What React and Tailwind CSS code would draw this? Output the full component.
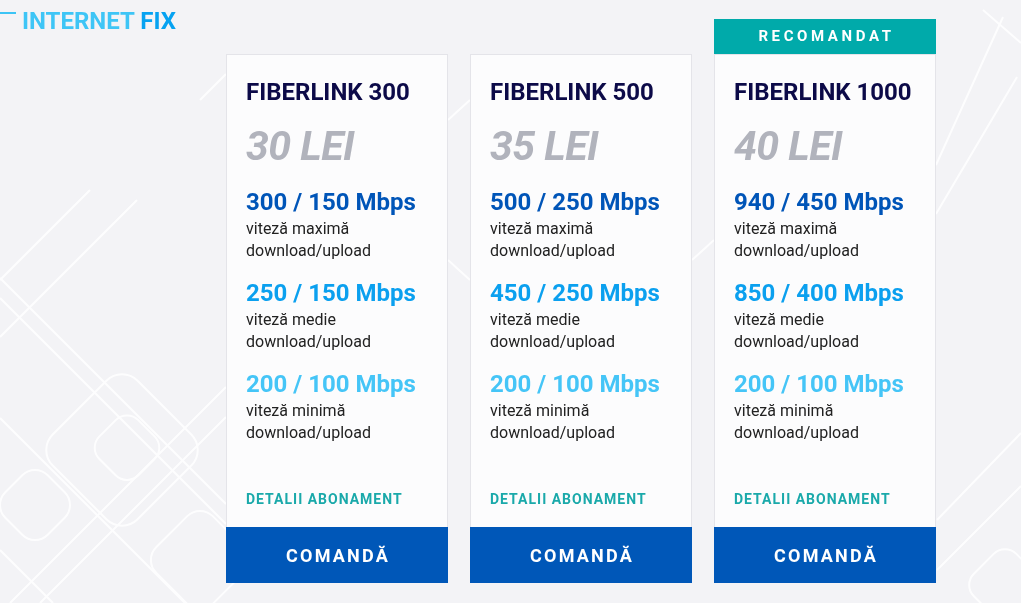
import React from "react";

const plans = [
  { name: "FIBERLINK 300", price: "30 LEI", speeds: ["300 / 150 Mbps", "250 / 150 Mbps", "200 / 100 Mbps"] },
  { name: "FIBERLINK 500", price: "35 LEI", speeds: ["500 / 250 Mbps", "450 / 250 Mbps", "200 / 100 Mbps"] },
  { name: "FIBERLINK 1000", price: "40 LEI", speeds: ["940 / 450 Mbps", "850 / 400 Mbps", "200 / 100 Mbps"], rec: true },
];

const labels = ["viteză maximă", "viteză medie", "viteză minimă"];
const colors = ["text-[#0055b8]", "text-[#0ba0ef]", "text-[#45c5f7]"];

function Pattern() {
  return (
    <svg className="absolute inset-0 w-full h-full pointer-events-none" viewBox="0 0 1021 603" preserveAspectRatio="none">
      <g stroke="#ffffff" strokeWidth="2" fill="none" opacity="0.85">
        <line x1="0" y1="280" x2="90" y2="190" />
        <line x1="0" y1="337" x2="137" y2="200" />
        <line x1="0" y1="278" x2="226" y2="504" />
        <line x1="0" y1="298" x2="226" y2="524" />
        <line x1="0" y1="418" x2="185" y2="603" />
        <line x1="0" y1="550" x2="53" y2="603" />
        <line x1="40" y1="603" x2="226" y2="417" />
        <line x1="10" y1="603" x2="226" y2="387" />
        <rect x="62" y="390" width="120" height="120" rx="22" transform="rotate(45 122 450)" />
        <rect x="100" y="420" width="55" height="55" rx="16" transform="rotate(45 127 447)" />
        <rect x="5" y="475" width="60" height="60" rx="18" transform="rotate(45 35 505)" />
        <rect x="160" y="520" width="80" height="80" rx="18" transform="rotate(45 200 560)" />
        <line x1="937" y1="520" x2="1021" y2="433" />
        <line x1="937" y1="570" x2="1021" y2="486" />
        <rect x="975" y="555" width="60" height="60" rx="16" transform="rotate(45 1005 585)" />
        <line x1="983" y1="10" x2="1021" y2="43" />
        <line x1="936" y1="165" x2="1003" y2="17" />
        <line x1="936" y1="214" x2="1017" y2="77" />
        <line x1="200" y1="100" x2="226" y2="74" />
        <line x1="448" y1="120" x2="470" y2="100" />
        <line x1="448" y1="260" x2="470" y2="280" />
        <line x1="692" y1="260" x2="714" y2="240" />
      </g>
    </svg>
  );
}

function Card({ plan }) {
  return (
    <div className="flex flex-col w-[222px]">
      {plan.rec ? (
        <div className="h-[35px] bg-[#00aaaa] flex items-center justify-center text-white font-bold text-[15px] tracking-[3.6px] pl-[3px]">
          RECOMANDAT
        </div>
      ) : (
        <div className="h-[35px]" />
      )}
      <div className="flex flex-col bg-[#fcfcfd] border border-[#e4e4e9] border-b-0 h-[473px] px-[19px] pt-[22px]">
        <div className="text-[24px] leading-[30px] font-bold text-[#0c0a48] whitespace-nowrap">{plan.name}</div>
        <div className="text-[41px] leading-[46px] font-bold italic text-[#b1b3bc] mt-[16px] tracking-[-0.5px]">{plan.price}</div>
        <div className="flex flex-col gap-[16px] mt-[18px]">
          {plan.speeds.map((s, i) => (
            <div key={i} className="flex flex-col">
              <div className={`text-[24px] leading-[31px] font-bold whitespace-nowrap ${colors[i]}`}>{s}</div>
              <div className="text-[16px] leading-[22px] text-[#222222]">{labels[i]}</div>
              <div className="text-[16px] leading-[22px] text-[#222222]">download/upload</div>
            </div>
          ))}
        </div>
        <div className="mt-auto mb-[18px] text-[14px] leading-[20px] font-bold tracking-[1px] text-[#1aa9aa] whitespace-nowrap">DETALII ABONAMENT</div>
      </div>
      <div className="h-[56px] bg-[#0057b8] flex items-center justify-center text-white font-bold text-[18px] tracking-[2.2px] pl-[2px]">
        COMANDĂ
      </div>
    </div>
  );
}

export default function App() {
  return (
    <div className="relative w-[1021px] h-[603px] overflow-hidden bg-[#f3f3f6]" style={{ fontFamily: "Roboto, 'Liberation Sans', sans-serif" }}>
      <Pattern />
      <div className="relative flex flex-col">
        <div className="flex items-start h-[19px]">
          <div className="mt-[12px] w-[16px] h-[2px] bg-[#3cc4f5]" />
          <div className="ml-[6px] mt-[9px] text-[24px] font-bold leading-[24px] whitespace-nowrap">
            <span className="text-[#3ec5f6]">INTERNET</span> <span className="text-[#06a2f1]">FIX</span>
          </div>
        </div>
        <div className="flex gap-[22px] pl-[226px]">
          {plans.map((p) => (
            <Card key={p.name} plan={p} />
          ))}
        </div>
      </div>
    </div>
  );
}
